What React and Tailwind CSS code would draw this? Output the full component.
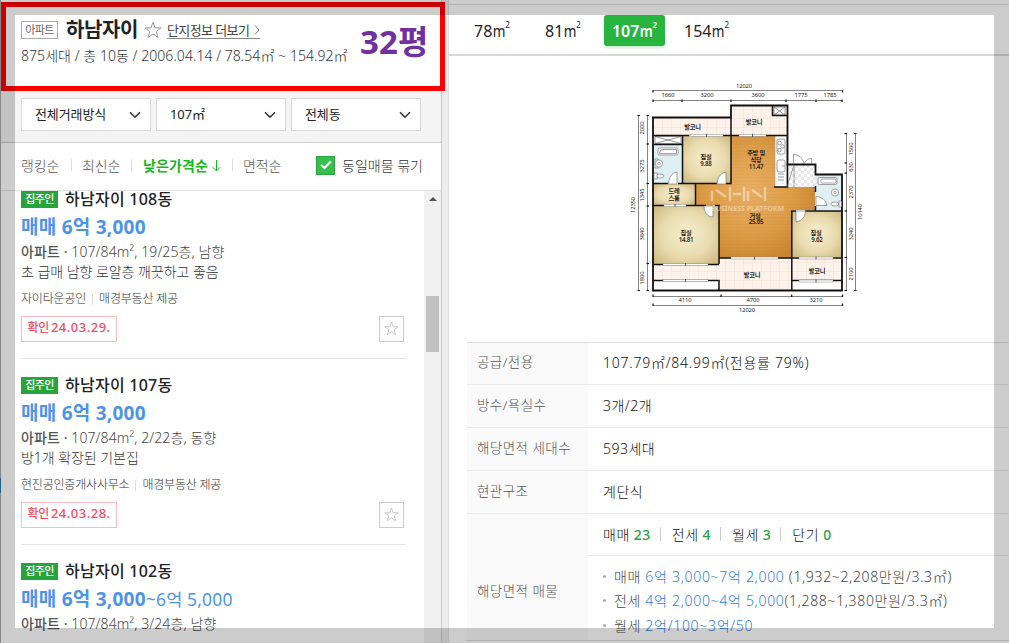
import React from "react";

const KR = "font-['Noto_Sans','Noto_Sans_CJK_KR',sans-serif]";

function Chevron() {
  return (
    <svg className="h-[8px] w-[12px]" viewBox="0 0 12 8" fill="none" stroke="#333" strokeWidth="1.6">
      <path d="M1 1.2 6 6.2 11 1.2" />
    </svg>
  );
}

function Star({ className, stroke }) {
  return (
    <svg className={className} viewBox="0 0 18 18" fill="none" stroke={stroke} strokeWidth="1">
      <path d="M9 1.2 11 6.9 17 7 12.2 10.6 14 16.5 9 13 4 16.5 5.8 10.6 1 7 7 6.9Z" />
    </svg>
  );
}

function Select({ label }) {
  return (
    <div className="flex h-[33px] w-[130px] items-center justify-between border border-[#d9d9d9] bg-white pr-[9px] pl-[13px]">
      <span className="mb-[2px] text-[13px] leading-[18px] tracking-[-0.1px] text-[#222]">{label}</span>
      <Chevron />
    </div>
  );
}

function Listing({ name, price, to, meta, desc, agent, date }) {
  return (
    <div className="h-[186px] shrink-0 whitespace-nowrap">
      <div className="flex h-[17px] items-center gap-[7px]">
        <span className="flex h-[17px] w-[37px] items-center justify-center bg-[#27a53b] text-[11px] font-medium tracking-[-0.6px] text-white">집주인</span>
        <span className="text-[16px] leading-[17px] font-medium tracking-[0.25px] text-[#222]">{name}</span>
      </div>
      <div className="mt-[6px] h-[26px] text-[19px] leading-[26px] font-bold tracking-[0.25px] text-[#4c94e8]">
        {price}
        {to && <span className="text-[17.5px] font-normal tracking-[0.15px]">{to}</span>}
      </div>
      <div className="mt-[2px] h-[19px] text-[14px] leading-[20px] font-light tracking-[0.1px] text-[#444]">
        <span className="font-medium tracking-[0.1px] text-[#555]">아파트 · </span>
        {meta}
      </div>
      <div className="h-[21px] text-[14px] leading-[21px] font-light tracking-[-0.05px] text-[#333]">{desc}</div>
      {agent && (
        <>
          <div className="mt-[8px] flex h-[18px] items-center text-[12px] font-light tracking-[-0.2px] text-[#333]">
            <span>{agent}</span>
            <span className="mx-[6px] h-[11px] w-px bg-[#ddd]" />
            <span>매경부동산 제공</span>
          </div>
          <div className="mt-[8px] flex items-start justify-between pr-[2px]">
            <span className="flex h-[26px] w-[96px] items-center justify-center border border-[#fcb9c0] pb-[2px] text-[13px] font-medium tracking-[0.5px] text-[#f34c59]">
              <span className="mr-[2px] text-[12px] tracking-[-0.3px]">확인</span>{date}
            </span>
            <span className="flex h-[26px] w-[25px] items-center justify-center border border-[#ccc] pb-[1px]">
              <Star className="size-[15px]" stroke="#bbb" />
            </span>
          </div>
          <div className="mt-[16px] h-px bg-[#e5e5e5]" />
        </>
      )}
      {!agent && (
        <div className="flex pt-[3px] text-[12px] leading-[15px] tracking-[-0.3px] text-[#555]">
          <span className="mr-[4px] flex w-[57px] justify-center bg-[#f0f0f0]">25년이내</span>
          <span className="mr-[5px] flex w-[42px] justify-center bg-[#f0f0f0]">방세개</span>
          <span className="mr-[4px] flex w-[66px] justify-center bg-[#f0f0f0]">화장실두개</span>
          <span className="flex w-[62px] justify-center bg-[#f0f0f0]">세대당1대</span>
        </div>
      )}
    </div>
  );
}

function Window({ x1, x2, y }) {
  const m = (x1 + x2) / 2;
  return (
    <g>
      <rect x={x1} y={y - 1} width={x2 - x1} height="2" fill="#fff" stroke="#888" strokeWidth=".5" />
      <path d={`M${m} ${y - 1.5}v3`} stroke="#222" strokeWidth=".7" />
    </g>
  );
}

function Dim({ x, y, r, children }) {
  return (
    <text x={x} y={y + 1.8} transform={r ? `rotate(-90 ${x} ${y})` : undefined} fontSize="5.8" letterSpacing="-.1" textAnchor="middle" fill="#222">
      {children}
    </text>
  );
}

function Room({ x, y, children }) {
  return (
    <text x={x} y={y + 2} fontSize="6.2" fontWeight="600" letterSpacing="-.25" textAnchor="middle" fill="#222">
      {children}
    </text>
  );
}

function Cross({ x, y, w, h }) {
  return <path d={`M${x} ${y}h${w}v${h}h${-w}zl${w} ${h}m0 ${-h}l${-w} ${h}`} fill="#fff" stroke="#555" strokeWidth=".6" />;
}

function FloorPlan() {
  const topTicks = [653, 682, 731, 786, 816, 842];
  const leftTicks = [115.5, 144, 183.5, 206, 263.5, 290.5];
  const rightTicks = [133.5, 163, 173, 211, 257.5, 290.5];
  const bottomTicks = [653, 721, 791.7, 842.5];
  return (
    <svg className="h-[245px] w-[250px]" viewBox="620 75 250 245">
      <defs>
        <pattern id="tile" x="653" y="118" width="9" height="9" patternUnits="userSpaceOnUse">
          <rect width="9" height="9" fill="#fdf3ea" />
          <path d="M0 0H9M0 0V9" stroke="#ecd9cd" strokeWidth=".7" />
        </pattern>
        <pattern id="check" width="6" height="6" patternUnits="userSpaceOnUse">
          <rect width="6" height="6" fill="#fff" />
          <path d="M0 0h3v3H0zM3 3h3v3H3z" fill="#e8e8e8" />
        </pattern>
        <pattern id="wood" width="26" height="10" patternUnits="userSpaceOnUse">
          <path d="M0 1H26M0 4.4H26M0 7.8H26M8 1v3.4M20 4.4v3.4" stroke="#b96f1c" strokeWidth=".5" opacity=".2" />
        </pattern>
        <radialGradient id="floor" cx=".45" cy=".45" r=".6">
          <stop offset="0" stopColor="#e9b066" />
          <stop offset=".6" stopColor="#dd9d48" />
          <stop offset="1" stopColor="#c98630" />
        </radialGradient>
        <radialGradient id="bed" r=".7">
          <stop offset="0" stopColor="#f7efcf" />
          <stop offset=".55" stopColor="#e9dbae" />
          <stop offset="1" stopColor="#cbb67c" />
        </radialGradient>
      </defs>

      <rect x="653" y="118" width="78" height="17" fill="url(#tile)" />
      <rect x="731" y="105" width="56" height="30" fill="url(#tile)" />
      <rect x="719" y="257" width="73" height="33" fill="url(#tile)" />
      <rect x="792" y="257" width="50" height="23" fill="url(#tile)" />
      <rect x="653" y="264" width="66" height="16" fill="url(#tile)" />
      <path d="M731 135H775V187H815V210H791V258H719V205H695V184H731Z" fill="url(#floor)" />
      <path d="M731 135H775V187H815V210H791V258H719V205H695V184H731Z" fill="url(#wood)" />
      <rect x="682" y="135" width="49" height="48" fill="url(#bed)" />
      <rect x="653" y="184" width="42" height="21" fill="url(#bed)" />
      <rect x="653" y="205" width="66" height="59" fill="url(#bed)" />
      <rect x="792" y="211" width="50" height="46" fill="url(#bed)" />
      <rect x="653" y="145" width="29" height="38" fill="#dfeff4" />
      <rect x="815" y="175" width="27" height="35" fill="#dfeff4" />
      <rect x="787" y="165" width="28" height="22" fill="url(#check)" />
      <rect x="775" y="136" width="11.5" height="51" fill="#fafafa" stroke="#888" strokeWidth=".4" />
      <Cross x={655} y={136.5} w={26} h={7} />
      <Cross x={774} y={107} w={11} h={8} />

      <g fill="none" stroke="#111" strokeWidth="1.8">
        <path d="M652 117.5H731V105.5H787.5V164.5H815.5V174.5H842V290.5H653V117" />
        <path d="M653 135.5H689M723 135.5H739M766 135.5H787M682.5 135V184M653 144.5H682M653 183.5H668M678 183.5H717M726 183.5H731V118M772.5 106V115.5H787" strokeWidth="1.5" />
        <path d="M695.5 184V205M653 205.5H664M686 205.5H706M715 205.5H719V264M653 264.5H719M719.5 258H731M770 258H842M791.8 290V211H796M805 211H842M815.5 186V192M815.5 206V211M787.5 164V187H774M653 280.5H719V290M792 280.5H842M719 258V264" strokeWidth="1.5" />
      </g>

      <Window x1={690} x2={723} y={135.3} />
      <Window x1={739} x2={766} y={135.3} />
      <Window x1={664} x2={686} y={205.3} />
      <Window x1={663} x2={708} y={264.5} />
      <Window x1={663} x2={708} y={280.5} />
      <Window x1={731} x2={778} y={258} />
      <Window x1={799} x2={833} y={258} />
      <Window x1={799} x2={833} y={281} />

      <g fill="#fff" stroke="#666" strokeWidth=".6">
        <path d="M677 184V172C671 173 669 178 668.5 184Z" />
        <path d="M726 184V172C720 173 717.5 178 717 184Z" />
        <path d="M713 206V217C707 217 704 212 704 206Z" />
        <path d="M796 211V222C802 221 805 217 805.5 211Z" />
        <path d="M816 205.5V196.5C822 197 826 200 827 205.5Z" />
        <path d="M793.5 164V154C799 155 803 158 804 164M811.5 164V158.5C807 159 805 161 804 164" fill="none" />
        <path d="M787 187 794 165M794 165V187" fill="none" />
        <rect x="658" y="148" width="20" height="7" rx="1.5" />
        <path d="M663 149.5H676.5V153.5H659.5C659.5 151 661 149.5 663 149.5Z" />
        <rect x="655" y="159" width="3" height="9" />
        <circle cx="659" cy="163.5" r="3.6" />
        <circle cx="659" cy="163.5" r="1.2" />
        <ellipse cx="660" cy="176" rx="4" ry="2" />
        <rect x="654" y="173" width="3" height="6" />
        <rect x="818" y="177.5" width="19" height="7" rx="1.5" />
        <rect x="821" y="179" width="15" height="4" rx="1" />
        <circle cx="835" cy="192.5" r="3.6" />
        <circle cx="835" cy="192.5" r="1.2" />
        <ellipse cx="835" cy="204" rx="4" ry="2" />
        <rect x="839" y="201" width="2.5" height="6" />
        <rect x="777" y="139" width="8" height="15" rx="2" />
        <circle cx="779.5" cy="143" r="1.8" />
        <circle cx="782.5" cy="146.5" r="1.8" />
        <circle cx="779.5" cy="150" r="1.8" />
        <rect x="777" y="160" width="8" height="12" rx="2" />
        <path d="M782 166H785M778 174H784M778 177H784M778 180H784" />
      </g>

      <g fill="none" stroke="#fff" strokeOpacity=".42" strokeWidth="2.4">
        <path d="M712 201V191M716 190 726 197M730 187V201M733 194H741M744 187V201M748 201V191M752 190 762 197M765 187V201" />
      </g>
      <text x="711" y="210.5" fontSize="7" textLength="73" lengthAdjust="spacingAndGlyphs" fontWeight="700" fill="#fff" fillOpacity=".42">BUSINESS PLATFORM</text>

      <Room x={692.5} y={126.5}>발코니</Room>
      <Room x={754} y={121.5}>발코니</Room>
      <Room x={706} y={157}>침실</Room>
      <Room x={706} y={164}>9.88</Room>
      <Room x={756} y={153}>주방 및</Room>
      <Room x={756} y={160}>식당</Room>
      <Room x={756} y={167}>11.47</Room>
      <Room x={674} y={190.5}>드레</Room>
      <Room x={674} y={197.5}>스룸</Room>
      <Room x={686} y={233}>침실</Room>
      <Room x={686} y={240}>14.81</Room>
      <Room x={755} y={215.5}>거실</Room>
      <Room x={756} y={222}>25.65</Room>
      <Room x={816} y={233}>침실</Room>
      <Room x={817} y={240}>9.62</Room>
      <Room x={752} y={275}>발코니</Room>
      <Room x={817} y={270.5}>발코니</Room>

      <path d="M653 90.5H842.5M653 100.5H842.5M638.5 115.5V290.5M647.5 115.5V290.5M846.5 133.5V290.5M855.5 133.5V290.5M653 296.5H842.5M653 305.5H842.5" fill="none" stroke="#666" strokeWidth=".8" />
      <g stroke="#111" strokeWidth="1.2">
        {topTicks.map((x) => <path key={x} d={`M${x} 99.5v2.5`} />)}
        {bottomTicks.map((x) => <path key={x} d={`M${x} 294.5v2.5`} />)}
        {leftTicks.map((y) => <path key={y} d={`M646.5 ${y}h2.5`} />)}
        {rightTicks.map((y) => <path key={y} d={`M844.5 ${y}h2.5`} />)}
        <path d="M653 90v2.5M842.5 90v2.5M653 303.5v2.5M842.5 303.5v2.5M637.5 115.5h2.5M637.5 290.5h2.5M854 133.5h2.5M854 290.5h2.5" />
      </g>
      <Dim x={744} y={86}>12020</Dim>
      <Dim x={668} y={95.5}>1660</Dim>
      <Dim x={707} y={95.5}>3200</Dim>
      <Dim x={758} y={95.5}>3600</Dim>
      <Dim x={801} y={95.5}>1775</Dim>
      <Dim x={830} y={95.5}>1785</Dim>
      <Dim x={685} y={300.5}>4110</Dim>
      <Dim x={753} y={300.5}>4700</Dim>
      <Dim x={816} y={300.5}>3210</Dim>
      <Dim x={747} y={310}>12020</Dim>
      <Dim r x={642} y={128}>2000</Dim>
      <Dim r x={642} y={166}>3275</Dim>
      <Dim r x={642} y={195}>1345</Dim>
      <Dim r x={642} y={234}>3840</Dim>
      <Dim r x={642} y={278}>1800</Dim>
      <Dim r x={633} y={205}>12350</Dim>
      <Dim r x={851} y={149}>1500</Dim>
      <Dim r x={851} y={167}>630</Dim>
      <Dim r x={851} y={192}>2370</Dim>
      <Dim r x={851} y={234}>3240</Dim>
      <Dim r x={851} y={274}>2100</Dim>
      <Dim r x={860} y={212}>10140</Dim>
    </svg>
  );
}

function Area({ n }) {
  return (
    <span className="flex items-start text-[16px] leading-[22px]">
      {n}
      <span className="inline-block w-[12px] origin-left scale-x-85 pl-[1px]">m</span>
      <span className="mt-[-4px] ml-[1px] text-[8px] leading-[18px]">2</span>
    </span>
  );
}

function Row({ label, children }) {
  return (
    <div className="flex h-[43px] border-b border-[#ebebeb] first:h-[42px]">
      <div className="flex w-[121px] items-center bg-[#fafafa] pb-[2px] pl-[10px] text-[13.5px] font-light tracking-[0.45px] text-[#555]">{label}</div>
      <div className="flex items-center pb-[2px] pl-[15px] text-[14px] font-light tracking-[0.5px] text-[#111]">{children}</div>
    </div>
  );
}

function Count({ label, n, last }) {
  return (
    <span className={last ? "flex gap-[4px]" : "mr-[11px] flex items-center gap-[4px]"}>
      <span>{label}</span>
      <span className="font-medium text-[#2ca344]">{n}</span>
      {!last && <span className="ml-[5px] h-[14px] w-px bg-[#ccc]" />}
    </span>
  );
}

function Range({ type, price, unit }) {
  return (
    <li className="flex h-[24.5px] items-center">
      <span className="mr-[8px] size-[3px] rounded-full bg-[#aaa]" />
      <span className="tracking-[0.65px] whitespace-pre">{type} <span className="tracking-[0.7px] text-[#2f7de0]">{price}</span>{unit}</span>
    </li>
  );
}

function Separator() {
  return <span className="h-[12px] w-px bg-[#ddd]" />;
}

export default function App() {
  return (
    <div className={`relative flex h-[643px] w-[1009px] overflow-hidden bg-white whitespace-nowrap ${KR}`}>
      <div className="h-full w-px bg-[#aaa] pt-[478px]"><div className="h-[15px] bg-[#287bab]" /></div>

      <section className="flex w-[441px] flex-col border-r border-[#c9c9c9]">
        <header className="flex h-[90px] shrink-0 pt-[18px] pl-[20px]">
          <div className="w-[339px]">
            <div className="flex h-[24px] items-center">
              <span className="flex h-[18px] w-[37px] items-center justify-center border border-[#aaa] text-[11px] tracking-[-0.7px] text-[#666]">아파트</span>
              <h1 className="ml-[8px] w-[73px] text-[20px] leading-[24px] font-bold tracking-[-0.4px] text-[#222]">하남자이</h1>
              <Star className="mb-[1px] ml-[5px] size-[18px]" stroke="#999" />
              <span className="ml-[5px] flex h-[18px] w-[93px] items-center justify-between border-b border-[#888] text-[13px] leading-[18px] tracking-[-0.6px] text-[#444]">
                단지정보 더보기
                <svg className="h-[10px] w-[6px]" viewBox="0 0 6 10" fill="none" stroke="#777"><path d="m1 .5 4 4.5-4 4.5" /></svg>
              </span>
            </div>
            <p className="mt-[4px] text-[14px] leading-[20px] font-light tracking-[0.05px] text-[#333]">875세대 / 총 10동 / 2006.04.14 / 78.54㎡ ~ 154.92㎡</p>
          </div>
          <strong className="mt-[4px] text-[33px] leading-[40px] font-bold tracking-[0.1px] text-[#7030a0]">32평</strong>
        </header>

        <div className="flex h-[53px] shrink-0 gap-[5px] border-b border-[#ccc] bg-[#f4f4f4] pt-[8px] pl-[20px]">
          <Select label="전체거래방식" />
          <Select label="107㎡" />
          <Select label="전체동" />
        </div>

        <div className="flex h-[48px] shrink-0 items-center border-b border-[#e2e2e2] pb-[3px] pl-[20px] text-[14px] font-light tracking-[-0.1px] text-[#555]">
          <span className="w-[50px]">랭킹순</span><Separator />
          <span className="ml-[10px] w-[49px]">최신순</span><Separator />
          <span className="ml-[11px] flex w-[89px] items-center font-bold tracking-[0.1px] text-[#16b81e]">
            낮은가격순
            <svg className="ml-[4px] h-[13px] w-[9px]" viewBox="0 0 9 13" fill="none" stroke="#16b81e"><path d="M4.5 1v11M.8 8.2 4.5 12l3.7-3.8" /></svg>
          </span><Separator />
          <span className="ml-[10px] w-[73px]">면적순</span>
          <span className="flex size-[19px] items-center justify-center border border-[#2ba43d] bg-[#35c04c]">
            <svg className="h-[10px] w-[12px]" viewBox="0 0 12 10" fill="none" stroke="#fff" strokeWidth="2.2"><path d="m1.2 5 3.3 3L10.8 1.5" /></svg>
          </span>
          <span className="ml-[7px] tracking-[0px] text-[#333]">동일매물 묶기</span>
        </div>

        <div className="flex h-[452px] justify-between overflow-hidden pl-[20px]">
          <div className="flex w-[385px] flex-col">
            <Listing name="하남자이 108동" price="매매 6억 3,000" meta="107/84m², 19/25층, 남향" desc="초 급매 남향 로얄층 깨끗하고 좋음" agent="자이타운공인" date="24.03.29." />
            <Listing name="하남자이 107동" price="매매 6억 3,000" meta="107/84m², 2/22층, 동향" desc="방1개 확장된 기본집" agent="현진공인중개사사무소" date="24.03.28." />
            <Listing name="하남자이 102동" price="매매 6억 3,000" to="~6억 5,000" meta="107/84m², 3/24층, 남향" />
          </div>
          <div className="flex w-[17px] flex-col items-center bg-[#f1f1f1] pt-[6px]">
            <svg className="h-[4px] w-[8px]" viewBox="0 0 8 4"><path d="M0 4 4 0l4 4z" fill="#505050" /></svg>
            <div className="mt-[95px] h-[56px] w-[13px] bg-[#c1c1c1]" />
          </div>
        </div>
      </section>

      <div className="w-[7px] border-r border-[#ddd] bg-[#ededed]" />

      <section className="flex flex-1 flex-col">
        <div className="h-[5px] shrink-0 border-b border-[#dfdfdf]" />
        <nav className="flex h-[51px] shrink-0 border-b-2 border-[#d9d9d9] pt-[10px] pl-[25px] text-[#222]">
          <div className="flex h-[31px] w-[71px] items-center"><Area n="78" /></div>
          <div className="flex h-[31px] w-[59px] items-center"><Area n="81" /></div>
          <div className="flex h-[31px] w-[61px] items-center justify-center rounded-[3px] bg-[#28b53f] font-semibold text-white shadow-[0_2px_3px_rgba(40,181,63,0.25)]"><Area n="107" /></div>
          <div className="ml-[19px] flex h-[31px] items-center"><Area n="154" /></div>
        </nav>
        <div className="h-[286px] shrink-0 pt-[19px] pl-[171px]"><FloorPlan /></div>
        <div className="ml-[18px] border-t border-[#ddd]">
          <div>
            <Row label="공급/전용"><span className="tracking-[0.75px]">107.79㎡/84.99㎡(전용률 79%)</span></Row>
            <Row label="방수/욕실수">3개/2개</Row>
            <Row label="해당면적 세대수">593세대</Row>
            <Row label="현관구조">계단식</Row>
          </div>
          <div className="flex h-[127px] border-b border-[#ddd]">
            <div className="flex w-[121px] items-center bg-[#fafafa] pt-[28px] pl-[10px] text-[13.5px] font-light tracking-[0.45px] text-[#555]">해당면적 매물</div>
            <div className="flex-1 text-[14px] font-light tracking-[0.5px] text-[#111]">
              <div className="flex h-[42px] items-center border-b border-[#ebebeb] pb-[1px] pl-[15px]">
                <Count label="매매" n="23" />
                <Count label="전세" n="4" />
                <Count label="월세" n="3" />
                <Count label="단기" n="0" last />
              </div>
              <ul className="pt-[8px] pl-[15px] text-[#444]">
                <Range type="매매" price="6억 3,000~7억 2,000" unit=" (1,932~2,208만원/3.3㎡)" />
                <Range type="전세" price="4억 2,000~4억 5,000" unit="(1,288~1,380만원/3.3㎡)" />
                <Range type="월세" price="2억/100~3억/50" unit="" />
              </ul>
            </div>
          </div>
        </div>
      </section>

      <div className="pointer-events-none absolute top-[2px] left-[1px] h-[89px] w-[444px] border-[5px] border-[#f00]" />
      <div className="pointer-events-none absolute inset-0 border-15 border-black/20" />
    </div>
  );
}
